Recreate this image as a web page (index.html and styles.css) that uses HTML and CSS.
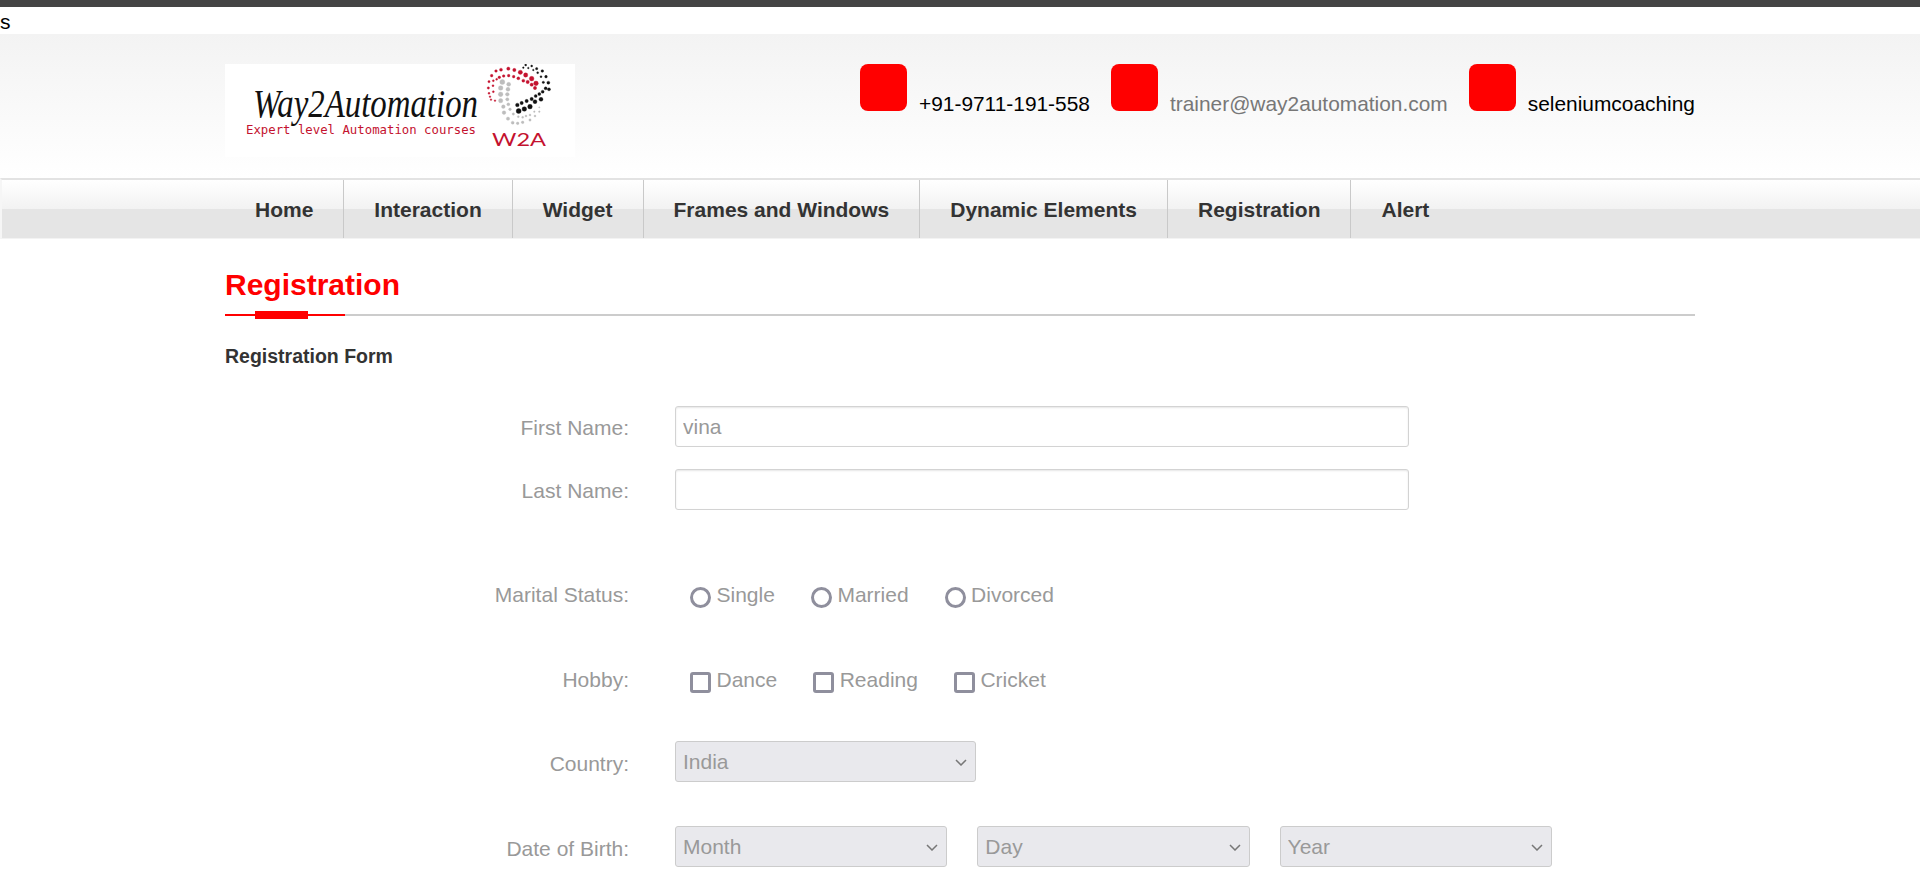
FILE: index.html
```html
<!DOCTYPE html>
<html lang="en">
<head>
<meta charset="utf-8">
<title>Registration | Way2Automation</title>
<link rel="stylesheet" href="styles.css">
</head>
<body>
<div class="stray">s</div>
<header class="masthead">
  <div class="wrap masthead-in">
    <svg class="logo" width="350" height="93" viewBox="0 0 350 93" aria-label="Way2Automation logo">
      <rect width="350" height="93" fill="#fff"/>
      <text class="logo-name" x="28" y="53" textLength="225" lengthAdjust="spacingAndGlyphs">Way2Automation</text>
      <text class="logo-tag" x="21" y="70" textLength="230" lengthAdjust="spacingAndGlyphs">Expert level Automation courses</text>
      <g transform="translate(255 -4) scale(.3333)">
        <g class="dots" fill="#c4122f" stroke="#c4122f">
          <circle cx="35" cy="47" r="4"/><circle cx="48" cy="33" r="4"/><circle cx="63" cy="29" r="4.5"/><circle cx="85" cy="26" r="5"/><circle cx="103" cy="30" r="5"/><circle cx="121" cy="37" r="6.5"/><circle cx="137" cy="45" r="6.5"/><circle cx="155" cy="56" r="7"/><circle cx="168" cy="70" r="7"/>
          <circle cx="58" cy="52" r="4"/><circle cx="71" cy="48" r="4"/><circle cx="86" cy="47" r="4"/><circle cx="101" cy="50" r="4"/><circle cx="115" cy="55" r="4.5"/><circle cx="130" cy="62" r="4.5"/><circle cx="143" cy="66" r="5"/><circle cx="155" cy="74" r="5"/><circle cx="165" cy="84" r="5"/>
          <circle cx="27" cy="65" r="3.5"/><circle cx="40" cy="62" r="3"/><circle cx="50" cy="58" r="3"/><circle cx="25" cy="84" r="3.5"/><circle cx="39" cy="77" r="3"/><circle cx="27" cy="100" r="3"/><circle cx="40" cy="95" r="3"/><circle cx="30" cy="110" r="2.5"/><circle cx="33" cy="119" r="2.5"/><circle cx="45" cy="122" r="2.5"/>
        </g>
        <g class="dots" fill="#bdbdbd" stroke="#bdbdbd">
          <circle cx="67" cy="66" r="7.5"/><circle cx="86" cy="73" r="6"/><circle cx="62" cy="84" r="7"/><circle cx="84" cy="88" r="6"/><circle cx="62" cy="103" r="7"/><circle cx="82" cy="103" r="5.5"/><circle cx="62" cy="122" r="6.5"/><circle cx="82" cy="118" r="5"/><circle cx="70" cy="140" r="5.5"/><circle cx="85" cy="133" r="4.5"/><circle cx="72" cy="158" r="5.5"/><circle cx="90" cy="148" r="4"/><circle cx="84" cy="176" r="5"/><circle cx="100" cy="162" r="3.5"/><circle cx="98" cy="188" r="4.5"/><circle cx="113" cy="190" r="4"/><circle cx="128" cy="187" r="4"/><circle cx="115" cy="170" r="3"/><circle cx="128" cy="172" r="3"/><circle cx="138" cy="168" r="3"/><circle cx="150" cy="165" r="3"/><circle cx="150" cy="180" r="3.5"/><circle cx="165" cy="168" r="3"/><circle cx="163" cy="155" r="2.5"/><circle cx="178" cy="155" r="2.5"/><circle cx="178" cy="142" r="2"/>
        </g>
        <g class="dots" fill="#111" stroke="#111">
          <circle cx="137" cy="15" r="3"/><circle cx="130" cy="23" r="2.5"/><circle cx="145" cy="24" r="2.5"/><circle cx="155" cy="18" r="3"/><circle cx="170" cy="26" r="3.5"/><circle cx="160" cy="30" r="2.5"/><circle cx="187" cy="33" r="4"/><circle cx="173" cy="38" r="3"/><circle cx="198" cy="50" r="4"/><circle cx="183" cy="50" r="3"/><circle cx="205" cy="68" r="4.5"/><circle cx="190" cy="67" r="3.5"/><circle cx="197" cy="85" r="4.5"/><circle cx="207" cy="88" r="4.5"/><circle cx="188" cy="95" r="4.5"/><circle cx="178" cy="102" r="4.5"/><circle cx="167" cy="108" r="4.5"/><circle cx="155" cy="117" r="5"/><circle cx="140" cy="123" r="5"/><circle cx="125" cy="129" r="5"/><circle cx="112" cy="135" r="5.5"/><circle cx="183" cy="118" r="6"/><circle cx="165" cy="125" r="6"/><circle cx="150" cy="140" r="7"/><circle cx="133" cy="147" r="7"/><circle cx="116" cy="153" r="7.5"/>
        </g>
      </g>
      <text class="logo-mark" x="267" y="82" textLength="54" lengthAdjust="spacingAndGlyphs">W2A</text>
    </svg>
    <ul class="contacts">
      <li class="contact"><span class="contact-icon"></span><span class="contact-text">+91-9711-191-558</span></li>
      <li class="contact"><span class="contact-icon"></span><span class="contact-text contact-muted">trainer@way2automation.com</span></li>
      <li class="contact"><span class="contact-icon"></span><span class="contact-text">seleniumcoaching</span></li>
    </ul>
  </div>
</header>
<nav class="mainnav">
  <ul class="wrap navlist">
    <li class="navitem">Home</li>
    <li class="navitem">Interaction</li>
    <li class="navitem">Widget</li>
    <li class="navitem">Frames and Windows</li>
    <li class="navitem">Dynamic Elements</li>
    <li class="navitem">Registration</li>
    <li class="navitem navitem-last">Alert</li>
  </ul>
</nav>
<main class="wrap">
  <div class="pagehead">
    <h1 class="pagetitle">Registration</h1>
    <div class="rule"><span class="rule-accent"></span><span class="rule-thick"></span></div>
  </div>
  <h2 class="formtitle">Registration Form</h2>
  <form class="regform">
    <div class="row">
      <label class="rowlabel">First Name:</label>
      <input class="textfield" type="text" value="vina">
    </div>
    <div class="row row-last-name">
      <label class="rowlabel">Last Name:</label>
      <input class="textfield" type="text">
    </div>
    <div class="row row-marital">
      <span class="rowlabel rowlabel-raised">Marital Status:</span>
      <div class="choices">
        <label class="choice"><input class="radio" type="radio" name="m"><span class="choice-text">Single</span></label>
        <label class="choice"><input class="radio" type="radio" name="m"><span class="choice-text">Married</span></label>
        <label class="choice"><input class="radio" type="radio" name="m"><span class="choice-text">Divorced</span></label>
      </div>
    </div>
    <div class="row row-hobby">
      <span class="rowlabel rowlabel-raised">Hobby:</span>
      <div class="choices">
        <label class="choice"><input class="check" type="checkbox"><span class="choice-text">Dance</span></label>
        <label class="choice"><input class="check" type="checkbox"><span class="choice-text">Reading</span></label>
        <label class="choice"><input class="check" type="checkbox"><span class="choice-text">Cricket</span></label>
      </div>
    </div>
    <div class="row row-country">
      <label class="rowlabel rowlabel-low">Country:</label>
      <div class="pickerbox pickerbox-country">
        <select class="picker"><option>India</option></select>
        <svg class="chevron" width="12" height="7" viewBox="0 0 12 7"><path d="M1 1l5 5 5-5" fill="none" stroke="#777" stroke-width="1.5"/></svg>
      </div>
    </div>
    <div class="row row-dob">
      <label class="rowlabel rowlabel-low">Date of Birth:</label>
      <div class="dob">
        <div class="pickerbox">
          <select class="picker"><option>Month</option></select>
          <svg class="chevron" width="12" height="7" viewBox="0 0 12 7"><path d="M1 1l5 5 5-5" fill="none" stroke="#777" stroke-width="1.5"/></svg>
        </div>
        <div class="pickerbox">
          <select class="picker"><option>Day</option></select>
          <svg class="chevron" width="12" height="7" viewBox="0 0 12 7"><path d="M1 1l5 5 5-5" fill="none" stroke="#777" stroke-width="1.5"/></svg>
        </div>
        <div class="pickerbox">
          <select class="picker"><option>Year</option></select>
          <svg class="chevron" width="12" height="7" viewBox="0 0 12 7"><path d="M1 1l5 5 5-5" fill="none" stroke="#777" stroke-width="1.5"/></svg>
        </div>
      </div>
    </div>
  </form>
</main>
</body>
</html>
```
FILE: styles.css
```css
* { box-sizing: border-box; }
html, body { margin: 0; padding: 0; }
body {
  border-top: 7px solid #444;
  background: #fff;
  color: #000;
  font-family: "Liberation Sans", Arial, sans-serif;
  font-size: 21px;
}
ul { list-style: none; margin: 0; padding: 0; }
.wrap { width: 1470px; margin: 0 auto; }
.stray { height: 27px; line-height: 29px; }

.masthead {
  height: 144px;
  padding-top: 30px;
  background: linear-gradient(#f3f3f3, #fff);
}
.masthead-in { display: flex; justify-content: space-between; align-items: flex-start; }
.logo { display: block; }
.dots { stroke-width: 1; }
.logo-name {
  font-family: "Liberation Serif", serif;
  font-style: italic;
  font-size: 40px;
  fill: #111;
}
.logo-tag {
  font-family: "DejaVu Sans Mono", monospace;
  font-size: 12px;
  fill: #c4122f;
}
.logo-mark {
  font-family: Lato, "Liberation Sans", sans-serif;
  font-size: 17px;
  fill: #c4122f;
}
.contacts { display: flex; gap: 21px; font-size: 20.9px; }
.contact { display: flex; align-items: flex-start; gap: 12px; }
.contact-icon { width: 47px; height: 47px; background: #f00; border-radius: 8px; }
.contact-text { line-height: 24px; padding-top: 28px; white-space: nowrap; }
.contact-muted { color: #777; }

.mainnav {
  height: 61px;
  border-top: 2px solid #e3e3e3;
  border-left: 2px solid #f6f6f6;
  border-bottom: 1px solid #f3f3f3;
  background: linear-gradient(#fff 0, #f2f2f2 29px, #e5e5e5 29px, #e5e5e5 100%);
}
.navlist { display: flex; height: 58px; position: relative; left: -1px; }
.navitem {
  padding: 0 30px;
  border-right: 1px solid #c9c9c9;
  color: #333;
  font-weight: bold;
  line-height: 60px;
  white-space: nowrap;
}
.navitem-last { border-right: 0; }

.pagehead { padding-top: 28px; }
.pagetitle {
  margin: 0;
  color: #f00;
  font-size: 30px;
  font-weight: bold;
  line-height: 36px;
}
.rule {
  position: relative;
  height: 2px;
  margin-top: 11px;
  background: #ccc;
}
.rule-accent { position: absolute; left: 0; top: 0; width: 120px; height: 2px; background: #f00; }
.rule-thick { position: absolute; left: 30px; top: -3px; width: 53px; height: 8px; background: #f00; }
.formtitle {
  margin: 27px 0 0;
  color: #333;
  font-size: 19.5px;
  font-weight: bold;
  line-height: 26px;
}

.regform { padding-top: 37px; color: #999; }
.row {
  display: grid;
  grid-template-columns: 404px 1fr;
  column-gap: 46px;
  align-items: center;
  height: 41px;
}
.row-last-name { margin-top: 22px; }
.row-marital { margin-top: 67px; }
.row-hobby { margin-top: 44px; }
.row-country { margin-top: 38px; }
.row-dob { margin-top: 44px; }
.rowlabel { display: block; padding-top: 2px; text-align: right; color: #999; }
.rowlabel-raised { padding-top: 0; padding-bottom: 6px; }
.rowlabel-low { padding-top: 4px; }
.textfield {
  width: 734px;
  height: 41px;
  padding: 0 7px;
  border: 1px solid #d3d3d3;
  border-radius: 3px;
  box-shadow: inset 0 1px 2px rgba(0,0,0,.1);
  background: #fff;
  color: #999;
  font: inherit;
  outline: 0;
}
.choices { display: flex; gap: 36px; padding-left: 15px; }
.choice { display: flex; align-items: center; gap: 5.5px; }
.choice-text { padding-bottom: 6px; }
.radio, .check {
  appearance: none;
  -webkit-appearance: none;
  flex: none;
  width: 21px;
  height: 21px;
  margin: 0;
  border: 3px solid #8f8f9d;
  background: #fff;
}
.radio { border-radius: 50%; }
.check { border-radius: 3px; }
.pickerbox { position: relative; width: 272.3px; height: 41px; }
.pickerbox-country { width: 301px; }
.picker {
  appearance: none;
  -webkit-appearance: none;
  display: block;
  width: 100%;
  height: 41px;
  padding: 0 7px;
  border: 1px solid #ccc;
  border-radius: 3px;
  background: #e9e9ed;
  color: #999;
  font: inherit;
}
.chevron { position: absolute; right: 9px; top: 18px; pointer-events: none; }
.dob { display: flex; gap: 30px; }
```
